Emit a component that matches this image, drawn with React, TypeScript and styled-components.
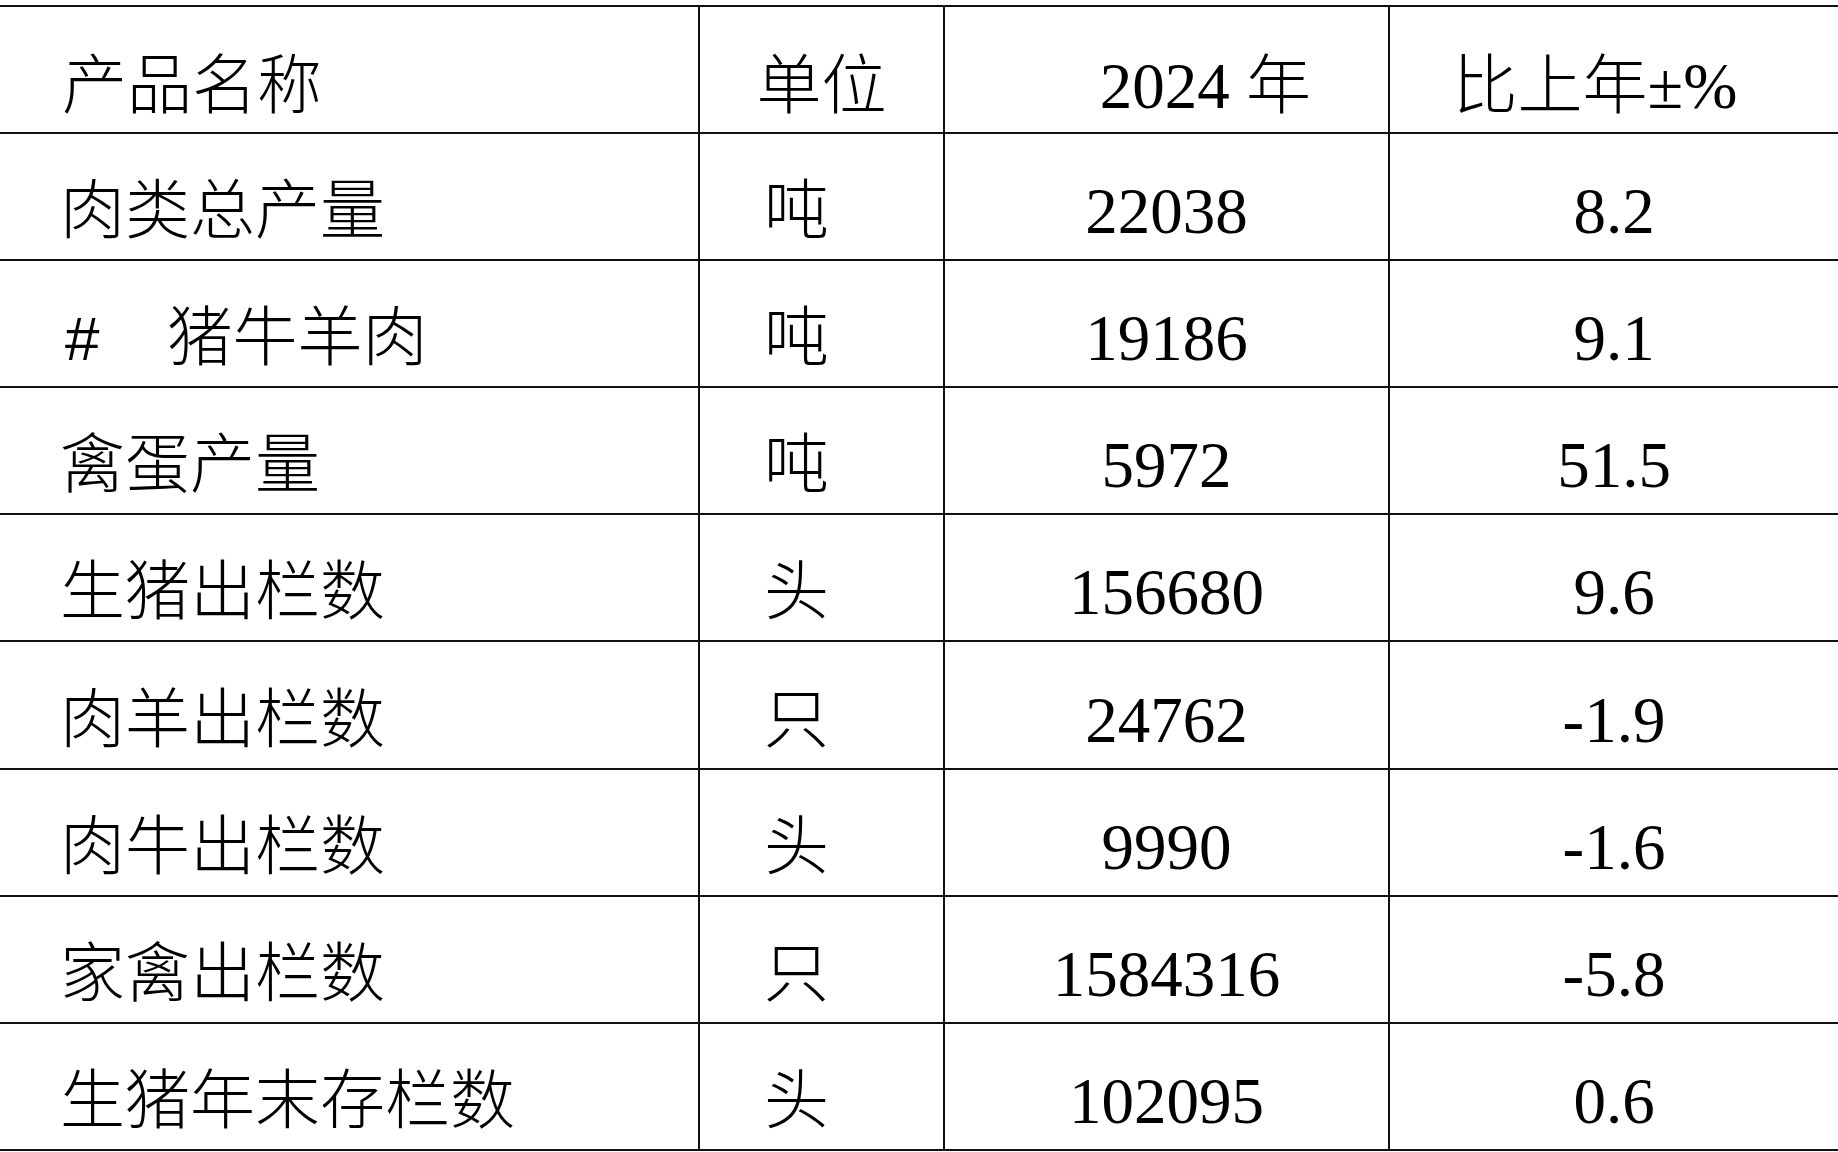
import React from "react";
import styled, { createGlobalStyle } from "styled-components";

const GlobalStyle = createGlobalStyle`
  html, body {
    margin: 0;
    padding: 0;
    background: #ffffff;
  }
  body {
    font-family: "Liberation Serif", "Noto Sans CJK SC", serif;
    color: #000000;
  }
`;

const Page = styled.div`
  width: 1838px;
  height: 1152px;
  padding-top: 5px;
  box-sizing: border-box;
  overflow: hidden;
  background: #ffffff;
`;

const Table = styled.div`
  display: flex;
  flex-direction: column;
  border-top: 2px solid #111111;
`;

const Row = styled.div`
  display: grid;
  grid-template-columns: 698px 245px 445px 450px;
  height: 127.1px;
  box-sizing: border-box;
  border-bottom: 2px solid #111111;
`;

interface CellProps {
  $align?: "left" | "center";
  $padLeft?: number;
  $padRight?: number;
  $first?: boolean;
  $head?: boolean;
}

const Cell = styled.div<CellProps>`
  display: flex;
  align-items: center;
  justify-content: ${({ $align }) => ($align === "left" ? "flex-start" : "center")};
  padding-left: ${({ $padLeft }) => $padLeft ?? 0}px;
  padding-right: ${({ $padRight }) => $padRight ?? 0}px;
  padding-top: ${({ $head }) => ($head ? 34 : 30)}px;
  box-sizing: border-box;
  border-left: ${({ $first }) => ($first ? "none" : "2px solid #111111")};
  font-size: 65px;
  line-height: 1;
  white-space: pre;
  font-weight: 300;
`;

const Hash = styled.span`
  font-family: "Liberation Sans", sans-serif;
  font-size: 62px;
  margin-left: 5px;
  margin-right: 68px;
`;

interface RowData {
  name: string;
  sub?: boolean;
  unit: string;
  value: string;
  change: string;
}

const rows: RowData[] = [
  { name: "肉类总产量", unit: "吨", value: "22038", change: "8.2" },
  { name: "猪牛羊肉", sub: true, unit: "吨", value: "19186", change: "9.1" },
  { name: "禽蛋产量", unit: "吨", value: "5972", change: "51.5" },
  { name: "生猪出栏数", unit: "头", value: "156680", change: "9.6" },
  { name: "肉羊出栏数", unit: "只", value: "24762", change: "-1.9" },
  { name: "肉牛出栏数", unit: "头", value: "9990", change: "-1.6" },
  { name: "家禽出栏数", unit: "只", value: "1584316", change: "-5.8" },
  { name: "生猪年末存栏数", unit: "头", value: "102095", change: "0.6" },
];

export default function App() {
  return (
    <>
      <GlobalStyle />
      <Page>
        <Table>
          <Row>
            <Cell $head $first $align="left" $padLeft={62}>
              产品名称
            </Cell>
            <Cell $head>单位</Cell>
            <Cell $head $padLeft={78}>2024 年</Cell>
            <Cell $head $padRight={38}>比上年±%</Cell>
          </Row>
          {rows.map((r) => (
            <Row key={r.name}>
              <Cell $first $align="left" $padLeft={60}>
                {r.sub && <Hash>#</Hash>}
                {r.name}
              </Cell>
              <Cell $padRight={50}>{r.unit}</Cell>
              <Cell>{r.value}</Cell>
              <Cell>{r.change}</Cell>
            </Row>
          ))}
        </Table>
      </Page>
    </>
  );
}
